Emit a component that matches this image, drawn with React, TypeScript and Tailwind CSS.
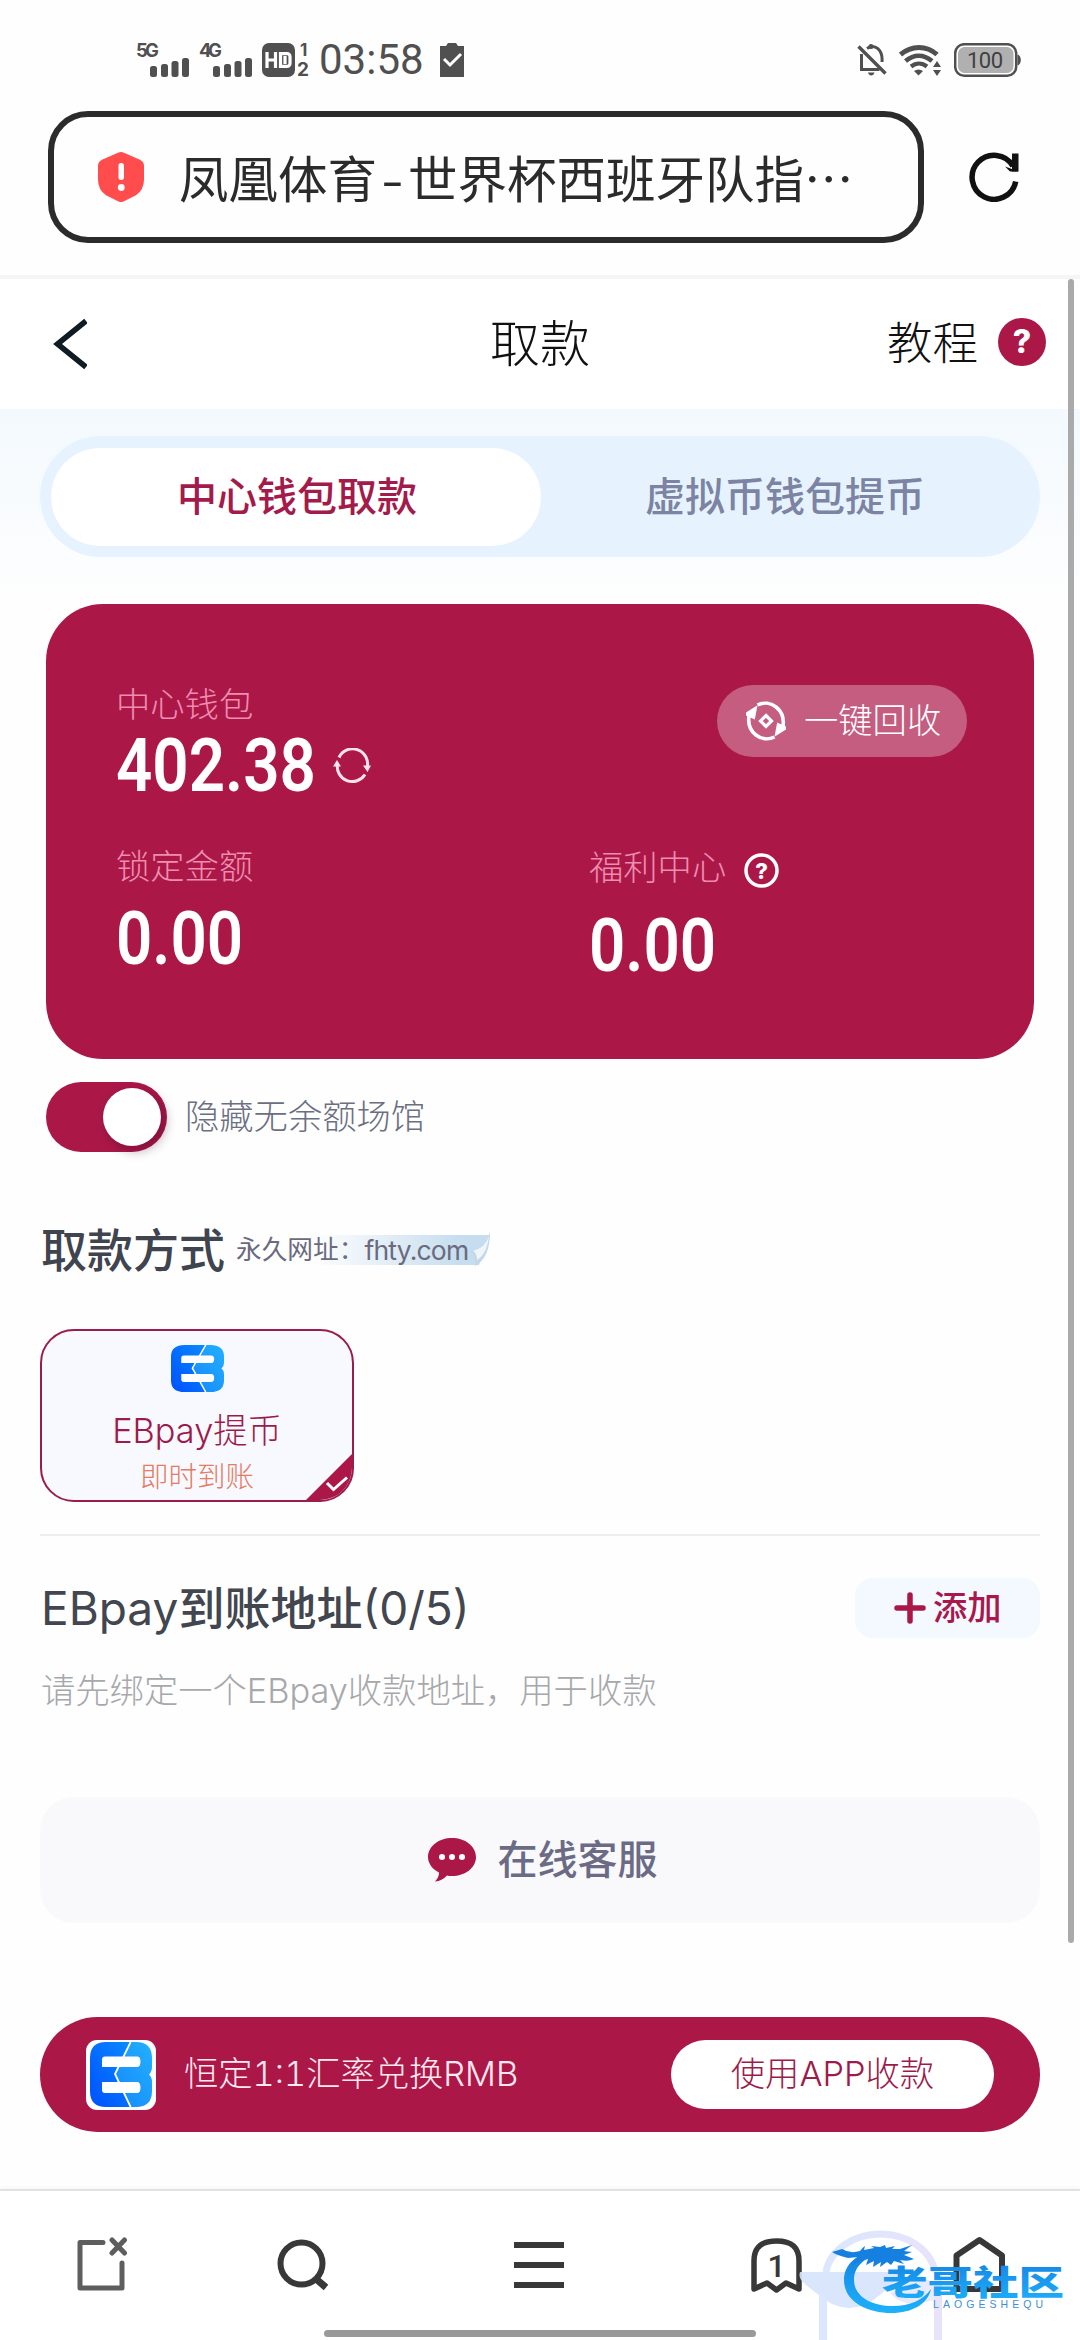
import type { ReactNode } from 'react';

const Signal = ({ label }: { label: string }) => (
  <svg className="overflow-visible" width="54" height="34" viewBox="0 0 54 34" fill="#505050">
    <text x="0" y="14" fontSize="18.5" fontWeight="700" fontFamily="Inter" textLength="23">
      {label}
    </text>
    <rect x="14" y="23" width="7" height="11" rx="2.5" />
    <rect x="25" y="21" width="7" height="13" rx="2.5" />
    <rect x="35.500" y="18" width="7" height="16" rx="2.5" />
    <rect x="46" y="15" width="7" height="19" rx="2.5" />
  </svg>
);

const StatusBar = () => (
  <div className="flex h-[111px] shrink-0 items-center justify-between pt-2 pr-[59px] pl-[136px] text-[#505050]">
    <div className="flex items-center">
      <Signal label="5G" />
      <div className="w-[9px]" />
      <Signal label="4G" />
      <svg className="ml-[9px] overflow-visible" width="48" height="34" viewBox="0 0 48 34">
        <rect width="33" height="34" rx="7" fill="#505050" />
        <g fill="none" stroke="#fff" strokeWidth="3.2">
          <path d="M5 9v16M13.500 9v16M5 17h8.500" />
          <path d="M18.500 10.600h6.500a3 3 0 0 1 3 3v6.800a3 3 0 0 1-3 3h-6.500zM23 13v8" />
        </g>
        <text x="38" y="13" fontSize="17" fontWeight="700" fontFamily="Inter" fill="#505050">1</text>
        <text x="35" y="33" fontSize="19" fontWeight="700" fontFamily="Inter" fill="#505050">2</text>
      </svg>
      <span className="ml-[9px] w-[106px] font-[Roboto] text-[42px] leading-none">03:58</span>
      <svg className="ml-[15px]" width="24" height="34" viewBox="0 0 24 34">
        <path d="M0 3h6l2-3h8l2 3h6v31H0z" fill="#505050" />
        <path d="M4 16l6 6 11-11" fill="none" stroke="#fff" strokeWidth="3" />
      </svg>
    </div>
    <div className="flex items-center">
      <svg width="30" height="32" viewBox="0 0 30 32" fill="none" stroke="#505050" strokeWidth="3">
        <path d="M4.500 10v15.500h18M10 4.500C18-1 26 6 25 18" />
        <path d="M1.500 2.500l27 27" strokeWidth="3.400" />
        <path d="M11 28.500h6.500c-1 4-5.500 4-6.500 0z" fill="#505050" stroke="none" />
        <circle cx="14" cy="2.500" r="2.500" fill="#505050" stroke="none" />
      </svg>
      <svg className="ml-3" width="42" height="32" viewBox="0 0 42 32" fill="none" stroke="#505050">
        <path d="M1.500 10.500c11-9.500 26-9.500 36.500 0" strokeWidth="5" />
        <path d="M6.500 17c8.500-7 18-7 26.500 0" strokeWidth="4.600" />
        <path d="M12 22.500c5-4 11-4 16 0" strokeWidth="4.200" />
        <path d="M15 27c3-2 6-2 9 0l-4.500 4.500z" fill="#505050" stroke="none" />
        <path d="M34 23l4-6 4 6zM34 26h8l-4 6z" fill="#505050" stroke="none" />
      </svg>
      <svg className="ml-[13px]" width="67" height="34" viewBox="0 0 67 34">
        <rect x="1.200" y="1.200" width="61" height="31.500" rx="9" fill="#fff" stroke="#505050" strokeWidth="2.500" />
        <rect x="4" y="4" width="55.500" height="26" rx="6.500" fill="#b0b0b0" />
        <path d="M64 12c3 1 3 9 0 10z" fill="#505050" stroke="#505050" />
        <text x="13" y="24.500" fontSize="22" fontFamily="Roboto" fill="#404040" textLength="36">100</text>
      </svg>
    </div>
  </div>
);

const AddressBar = () => (
  <div className="flex h-[164px] shrink-0 items-start pl-12">
    <div className="flex h-[132px] w-[876px] items-center rounded-[40px] border-[6px] border-[#2b2b2b] pl-[44px]">
      <svg width="46" height="50" viewBox="0 0 46 50">
        <path d="M20 .800q3-1.500 6 0l16 7q4 2 4 6v14q0 10-8 15.500L26 49.300q-3 1.500-6 0L8 43.300Q0 37.800 0 27.800v-14q0-4 4-6z" fill="#ff4d4d" />
        <rect x="20.500" y="11" width="5.500" height="17" rx="2.700" fill="#fff" />
        <circle cx="23.300" cy="35.500" r="3.400" fill="#fff" />
      </svg>
      <span className="ml-[35px] flex font-['Noto_Sans_CJK_SC',sans-serif] text-[49.500px] leading-none whitespace-nowrap text-[#2b2b2b]">
        <span>凤凰体育</span>
        <span className="w-[31px] origin-center scale-x-130 text-center">-</span>
        <span>世界杯西班牙队指…</span>
      </span>
    </div>
    <svg className="mt-[41px] ml-[45px]" width="52" height="50" viewBox="0 0 52 50" fill="none" stroke="#111" strokeWidth="5.500">
      <path d="M46.700 29.500A22 22 0 1 1 44 14" />
      <path d="M43 19.500V1.500h6.500v18z" fill="#111" stroke="none" />
      <path d="M49.500 19.500H41l-5-5z" fill="#111" stroke="none" />
    </svg>
  </div>
);

const PageHeader = () => (
  <div className="grid h-[130px] shrink-0 grid-cols-3 items-center bg-white pr-[34px] pl-[53px] font-light text-[#111]">
    <svg width="34" height="52" viewBox="0 0 34 52" fill="none" stroke="#0f1c25" strokeWidth="5.500">
      <path d="M33 3L4.500 26 33 49" />
    </svg>
    <h1 className="pr-[19px] text-center text-[50px] leading-none font-light">取款</h1>
    <div className="flex items-center justify-end">
      <span className="text-[45.500px] leading-none">教程</span>
      <div className="mb-1 ml-5 flex h-12 w-12 items-center justify-center rounded-full bg-[#ab1848] font-[Inter] text-[32px] leading-none font-extrabold text-white">
        ?
      </div>
    </div>
  </div>
);

const Amount = ({ children }: { children: ReactNode }) => (
  <span className="inline-block origin-left scale-x-[0.86] font-[Roboto] text-[74px] leading-[60px] font-semibold text-white">
    {children}
  </span>
);

const WalletCard = () => (
  <div className="mx-[46px] mt-[47px] h-[455px] shrink-0 rounded-[57px] bg-[#ab1848] px-[71px] pt-[81px] font-light">
    <div className="flex h-[163px] justify-between">
      <div className="-ml-px">
        <div className="pt-px text-[34.300px] leading-[38px] text-[#f08db0]">中心钱包</div>
        <div className="mt-[12px] flex h-[60px] items-center">
          <div className="w-[217px] whitespace-nowrap">
            <Amount>402.38</Amount>
          </div>
          <svg width="38" height="36" viewBox="0 0 38 36" fill="none" stroke="#ffe3ec" strokeWidth="3">
            <path d="M6 9.500A15 15 0 0 1 34 20" />
            <path d="M32 26.500A15 15 0 0 1 4.500 16" />
            <path d="M30 17.500h8L34.500 24zM0 18.500h8L4 12z" fill="#ffe3ec" stroke="none" />
          </svg>
        </div>
      </div>
      <div className="-mr-1 flex h-[72px] w-[250px] items-center rounded-full bg-white/30 pl-[29px]">
        <svg width="40" height="40" viewBox="0 0 40 40" fill="none" stroke="#fff" strokeWidth="3.600">
          <path d="M11.500 4C24-2 41 8 36.500 28" />
          <path d="M28.500 36C16 42-1 32 3.500 12" />
          <path d="M31 32l1.500-8 6.500 3zM9 8L7.500 16 1 13z" fill="#fff" />
          <path d="M20 14.500l5.500 5.500-5.500 5.500-5.500-5.500z" strokeWidth="3.200" />
        </svg>
        <span className="ml-[18px] text-[34.300px] leading-none text-white">一键回收</span>
      </div>
    </div>
    <div className="flex">
      <div className="-ml-px w-[473px]">
        <div className="flex h-[38px] items-center text-[34.300px] leading-none text-[#f08db0]">锁定金额</div>
        <div className="mt-[23px]">
          <Amount>0.00</Amount>
        </div>
      </div>
      <div className="pt-px">
        <div className="flex h-[38px] items-center text-[34.300px] leading-none text-[#f08db0]">
          福利中心
          <svg className="mt-1 ml-[18px]" width="35" height="35" viewBox="0 0 35 35">
            <circle cx="17.500" cy="17.500" r="15.500" fill="none" stroke="#fff" strokeWidth="3.500" />
            <text x="17.500" y="25.500" textAnchor="middle" fontSize="22" fontWeight="800" fontFamily="Inter" fill="#fff">?</text>
          </svg>
        </div>
        <div className="mt-[29px]">
          <Amount>0.00</Amount>
        </div>
      </div>
    </div>
  </div>
);

// EB monogram, split by a crack down the middle
const EbLogo = ({ className, id }: { className: string; id: string }) => (
  <svg className={className} viewBox="0 0 62 65" preserveAspectRatio="none">
    <defs>
      <linearGradient id={`${id}-l`} x1="1" y1="0" x2="0" y2="1">
        <stop offset="0" stopColor="#0a8aff" />
        <stop offset="1" stopColor="#0050ff" />
      </linearGradient>
      <linearGradient id={`${id}-r`} x1="1" y1="0" x2="0" y2="1">
        <stop offset="0" stopColor="#22b0ff" />
        <stop offset="1" stopColor="#1687fb" />
      </linearGradient>
    </defs>
    <path d="M16 0h24.600L25 32l15.600 33H16Q0 65 0 49V16Q0 0 16 0z" fill={`url(#${id}-l)`} />
    <path d="M40.600 0H46q16 0 16 16v9q0 5-3 7.500 3 2.500 3 7.500v9q0 16-16 16h-5.400L25 32z" fill={`url(#${id}-r)`} />
    <path d="M40.600 0L25 32l15.600 33" fill="none" stroke="#fff" strokeWidth="1.800" />
    <path d="M12 17.500Q12 14.500 15 14.500h32q3.500 0 3.500 5.200T47 25H12zM12 40h35q3.500 0 3.500 5.500T47 51H15q-3 0-3-3z" fill="#fff" />
  </svg>
);

const PaymentMethod = () => (
  <div className="relative mt-[54px] flex h-[173px] w-[314px] shrink-0 flex-col items-center overflow-hidden rounded-[34px] border-2 border-[#9a1c4c] bg-[#f8f9fe] pt-[14px]">
    <EbLogo id="eb-method" className="h-[47px] w-[53px]" />
    <div className="mt-[18px] text-[34.300px] leading-[42px] font-light text-[#9c1b4b]">EBpay提币</div>
    <div className="mt-[8px] text-[28.500px] leading-[34px] font-light text-[#e47b62]">即时到账</div>
    <svg className="absolute -right-[2px] -bottom-[2px]" width="50" height="50" viewBox="0 0 50 50">
      <path d="M50 0v50H0z" fill="#ab1848" />
      <path d="M23 31l6.500 6.500L43 25.500" fill="none" stroke="#fff" strokeWidth="3" />
    </svg>
  </div>
);

const BottomNav = () => (
  <div className="relative mt-auto h-[151px] shrink-0 border-t-2 border-[#e2e2e2] bg-white shadow-[0_-2px_4px_rgba(0,0,0,0.03)]">
    <div className="flex items-start pt-[44px] pl-[76px]">
      <svg width="52" height="56" viewBox="0 0 52 56" fill="none" stroke="#5e5e5e" strokeWidth="5" strokeLinecap="round" strokeLinejoin="round">
        <path d="M27 7.500H4V53h42V28M36 5l12.500 13M48.500 5L36 18" />
      </svg>
      <svg className="ml-[149px]" width="52" height="56" viewBox="0 0 52 56" fill="none" stroke="#383838" strokeWidth="6">
        <circle cx="24.500" cy="28.500" r="21" />
        <path d="M38.500 43.500l10.500 9" strokeWidth="7" />
      </svg>
      <svg className="ml-[185px]" width="50" height="56" viewBox="0 0 50 56" fill="#383838">
        <path d="M0 7h50v6H0zM0 27h50v6H0zM0 47h50v6H0z" />
      </svg>
      <svg className="ml-[187px]" width="51" height="60" viewBox="0 0 51 60" fill="none" stroke="#383838" strokeWidth="5.500" strokeLinejoin="round">
        <path d="M3 54V26C3 11 12 6 25.500 6S48 11 48 26v28l-13-6-9.500 7-9.500-7z" />
        <text x="25.500" y="42" textAnchor="middle" fontSize="32" fontFamily="Roboto" fontWeight="500" fill="#383838" stroke="none">1</text>
      </svg>
      <svg className="ml-[151px]" width="53" height="60" viewBox="0 0 53 60" fill="none" stroke="#383838" strokeWidth="6" strokeLinejoin="round">
        <path d="M3.500 54V20.500L26.500 5 49 20.500V54z" />
      </svg>
    </div>
    <div className="absolute bottom-[3px] left-[324px] h-[7px] w-[432px] rounded-full bg-[#999]" />

    {/* Watermark */}
    <svg className="absolute right-0 bottom-0" width="290" height="120" viewBox="790 2220 290 120">
      <defs>
        <linearGradient id="wm" x1="0" y1="0" x2="0" y2="1">
          <stop offset="0" stopColor="#1480e2" />
          <stop offset="1" stopColor="#1db2fa" />
        </linearGradient>
        <linearGradient id="ghost" x1="0" y1="0" x2="1" y2="0">
          <stop offset="0" stopColor="#d6e5fd" />
          <stop offset="1" stopColor="#e6e1fb" />
        </linearGradient>
      </defs>
      <g opacity="0.9">
        <path d="M826 2272a55 44 0 0 1 109 0" fill="none" stroke="url(#ghost)" strokeWidth="7" />
        <path d="M800 2272h106l-25 22q-15 14-32 14-18-1-30-13-10-7-15-12-6-5-4-11z" fill="#d6e4fc" />
        <path d="M890 2293q15-3 20-21 10 0 31 18l-7 10q-30 10-44-7z" fill="#e6e8fc" />
        <path d="M819 2290l8 8v42h-8zM934 2270h8v70h-8z" fill="url(#ghost)" />
      </g>
      <path d="M878 2250C852 2254 844 2268 844 2280c0 20 20 33 48 33 20 0 36-9 39-24-8 11-21 17-38 17-24 0-39-11-39-26 0-12 8-22 28-27z" fill="url(#wm)" />
      <path d="M842 2249q8 5 18 2 2-3 5-5l-1 4 10-2-3-2 9 1 5-2 1 3 9-2-3 3 8 0 12-4-8 6 8 1-8 3 10 4q-6 3-14 1l4 4-10-3-3 4-4-3-7 5 1-5-8 5 1-6-8 4 2-6q-10 2-16 6l6-8-10 1q-12-3-16-6z" fill="#1580e0" />
      <text x="882" y="2294.500" fontSize="34" fontWeight="900" fontFamily="Noto Sans CJK SC" fill="url(#wm)" textLength="182" lengthAdjust="spacingAndGlyphs">
        老哥社区
      </text>
      <text x="933" y="2307.500" fontSize="10.500" fontWeight="500" fontFamily="Liberation Sans" fill="#3c8fd8" textLength="110">
        LAOGESHEQU
      </text>
    </svg>
  </div>
);

const App = () => {
  return (
    <div className="relative flex h-[2340px] w-[1080px] flex-col overflow-hidden bg-[#fefefe] font-[Inter,'Noto_Sans_CJK_SC',sans-serif]">
      <StatusBar />
      <AddressBar />
      <div className="h-1 shrink-0 bg-[#f5f5f6]" />
      <PageHeader />

      {/* Tabs and balance */}
      <div className="flex shrink-0 flex-col bg-linear-to-b from-[#f3f9fe] to-[#fefefe] to-[190px] pt-[27px]">
        <div className="mx-10 flex h-[121px] items-center rounded-full bg-[#e6f3ff] px-[11px] text-[40px] leading-none font-medium">
          <div className="flex h-[98px] flex-1 items-center justify-center rounded-full bg-white pl-[2px] text-[#a31b4b]">
            中心钱包取款
          </div>
          <div className="flex-1 text-center text-[#7c83a3]">虚拟币钱包提币</div>
        </div>
        <WalletCard />
      </div>

      <div className="mt-[23px] ml-[46px] flex h-[70px] shrink-0 items-center">
        <div className="flex h-[70px] w-[121px] items-center justify-end rounded-full bg-[#ab1848] pr-[6px]">
          <div className="h-[58px] w-[58px] rounded-full bg-white shadow-[4px_4px_12px_rgba(60,0,40,0.4)]" />
        </div>
        <span className="ml-[18px] pt-px text-[34.300px] leading-none font-light text-[#6b6f82]">隐藏无余额场馆</span>
      </div>

      {/* Withdrawal method */}
      <div className="flex grow flex-col px-10">
        <div className="mt-[73px] flex h-[50px] shrink-0 items-center">
          <h2 className="w-[196px] pl-px text-[46px] leading-none font-medium text-[#40444f]">取款方式</h2>
          <div className="relative flex h-[30px] w-[254px] items-center bg-linear-to-r from-transparent from-30% to-[#c5ddee] to-90% text-[25.700px] leading-none whitespace-nowrap text-[#6b6a80]">
            永久网址：
            <span className="text-[26.500px] tracking-[-0.800px]">fhty.com</span>
            <svg className="absolute -top-[3px] right-0" width="22" height="36" viewBox="0 0 22 36">
              <path d="M10 36h12V0z" fill="#fefefe" />
              <path d="M22 0q0 26-15 34 1-12-5-15Q16 18 22 0z" fill="#c3d7e6" />
              <path d="M21 4q-2 18-12 24 0-7-4-9 12-3 16-15z" fill="#eef6fb" />
            </svg>
          </div>
        </div>

        <PaymentMethod />

        <div className="mt-8 h-[2px] shrink-0 bg-[#efefef]" />

        <div className="mt-[42px] flex h-[60px] shrink-0 items-center justify-between">
          <h2 className="pl-px text-[46px] leading-none font-medium text-[#42464f]">
            <span className="font-normal">EBpay</span>到账地址<span className="font-normal">(0/5)</span>
          </h2>
          <div className="flex h-[60px] w-[185px] items-center rounded-[18px] bg-[#f3f9fe] pl-[39px] text-[34.300px] leading-none font-medium text-[#a8184a]">
            <svg className="mr-[7px]" width="32" height="32" viewBox="0 0 32 32" stroke="#ab1848" strokeWidth="5.500" strokeLinecap="round">
              <path d="M16 3v26M3 16h26" />
            </svg>
            添加
          </div>
        </div>
        <p className="mt-[34px] h-[38px] shrink-0 pl-px text-[34.300px] leading-[38px] font-light text-[#a6a8ab]">
          请先绑定一个EBpay收款地址，用于收款
        </p>

        <div className="mt-[87px] flex h-[126px] shrink-0 items-center justify-center rounded-[34px] bg-[#f9f9fc] pl-[5px]">
          <svg width="48" height="44" viewBox="0 0 48 44">
            <path d="M24 0C37 0 48 8 48 19S37 38 24 38q-3 0-5-.500Q14 43 7 43.500q4-4 4-9C4 31 0 25 0 19 0 8 11 0 24 0z" fill="#ab1848" />
            <g fill="#fff">
              <circle cx="14" cy="19" r="3" />
              <circle cx="24" cy="19" r="3" />
              <circle cx="34" cy="19" r="3" />
            </g>
          </svg>
          <span className="ml-[22px] text-[40px] leading-none font-medium text-[#6b6b86]">在线客服</span>
        </div>

        <div className="mt-[94px] flex h-[115px] shrink-0 items-center rounded-full bg-[#ab1848] pr-[46px] pl-[46px] text-[34.300px] leading-none font-light">
          <div className="flex h-[70px] w-[70px] items-center justify-center rounded-[11px] bg-white">
            <EbLogo id="eb-banner" className="h-[65px] w-[62px]" />
          </div>
          <span className="ml-[28px] text-[#ffe9f0] tabular-nums">恒定1:1汇率兑换RMB</span>
          <div className="ml-auto flex h-[69px] w-[323px] items-center justify-center rounded-full bg-white text-[#9c1b4b]">
            使用APP收款
          </div>
        </div>
      </div>

      <BottomNav />

      {/* Scroll thumb */}
      <div className="absolute top-[279px] left-[1068px] h-[1664px] w-[6px] rounded-full bg-[#aaa]" />
    </div>
  );
};

export default App;
